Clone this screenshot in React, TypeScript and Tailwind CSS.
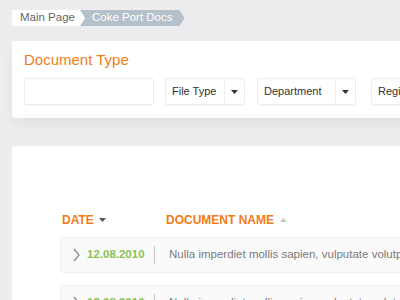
const rows = [
  { date: "12.08.2010", name: "Nulla imperdiet mollis sapien, vulputate volutpat lorem ipsum" },
  { date: "12.08.2010", name: "Nulla imperdiet mollis sapien, vulputate volutpat lorem ipsum" },
];

function Caret({ up = false, className = "" }: { up?: boolean; className?: string }) {
  return (
    <svg width="7" height="4" viewBox="0 0 7 4" className={className}>
      {up ? <path d="M0 4 L3.5 0 L7 4 Z" fill="currentColor" /> : <path d="M0 0 L7 0 L3.5 4 Z" fill="currentColor" />}
    </svg>
  );
}

function Select({ label, width }: { label: string; width: string }) {
  return (
    <div className={`${width} h-[27px] shrink-0 flex bg-white rounded-[3px] border border-[#ececec] shadow-[0_1px_1px_rgba(0,0,0,0.03)]`}>
      <div className="flex-1 flex items-center pl-[6px] text-[11px] text-[#333] overflow-hidden whitespace-nowrap">{label}</div>
      <div className="w-[20px] shrink-0 border-l border-[#ececec] flex items-center justify-center text-[#333]">
        <Caret />
      </div>
    </div>
  );
}

export default function App() {
  return (
    <div className="w-[400px] h-[300px] overflow-hidden bg-[#ededef]" style={{ fontFamily: '"Liberation Sans", Arial, sans-serif' }}>
      {/* BREADCRUMB */}
      <div className="flex pt-[10px] pl-[12px] h-[26px]">
        <div className="relative z-10 h-[16px] pl-[8px] pr-[10px] bg-white flex items-center text-[11.5px] text-[#666] [clip-path:polygon(0_0,calc(100%-5px)_0,100%_50%,calc(100%-5px)_100%,0_100%)]">
          Main Page
        </div>
        <div className="-ml-[5px] h-[16px] pl-[12px] pr-[12px] bg-[#b4c0ca] flex items-center text-[11.5px] text-white [clip-path:polygon(0_0,calc(100%-5px)_0,100%_50%,calc(100%-5px)_100%,0_100%,5px_50%)]">
          Coke Port Docs
        </div>
      </div>

      {/* FILTER PANEL */}
      <div className="mt-[15px] ml-[12px] w-[420px] h-[77px] bg-white rounded-l-[3px] shadow-[0_6px_12px_rgba(0,0,0,0.05)] pl-[12px] pt-[10px]">
        <h1 className="text-[15px] leading-[18px] text-[#f07d17]">Document Type</h1>
        <div className="mt-[9px] flex">
          <div className="w-[130px] h-[27px] shrink-0 bg-white rounded-[3px] border border-[#ececec] shadow-[0_1px_1px_rgba(0,0,0,0.03)]" />
          <div className="ml-[11px] shrink-0">
            <Select label="File Type" width="w-[80px]" />
          </div>
          <div className="ml-[12px] shrink-0">
            <Select label="Department" width="w-[99px]" />
          </div>
          <div className="ml-[15px] shrink-0">
            <Select label="Region" width="w-[99px]" />
          </div>
        </div>
      </div>

      {/* DOCUMENTS PANEL */}
      <div className="mt-[28px] ml-[12px] w-[420px] h-[200px] bg-white rounded-tl-[3px] pl-[48px] pt-[66px]">
        <div className="flex items-center text-[12px] font-bold text-[#f07d17] h-[15px]">
          <div className="w-[106px] shrink-0 flex items-center pl-[2px]">
            DATE
            <Caret className="ml-[5px] text-[#555]" />
          </div>
          <div className="flex items-center">
            DOCUMENT NAME
            <Caret up className="ml-[6px] text-[#c8c8c8]" />
          </div>
        </div>

        <div className="mt-[10px] flex flex-col gap-[12px]">
          {rows.map((r, i) => (
            <div key={i} className="h-[36px] flex items-center overflow-hidden bg-[#fafafa] border border-[#f0f0f0] rounded-l-[3px]">
              <svg width="7" height="14" viewBox="0 0 7 14" className="shrink-0 ml-[12px] text-[#8a8a8a]">
                <path d="M1 1 L6 7 L1 13" fill="none" stroke="currentColor" strokeWidth="1.3" />
              </svg>
              <span className="shrink-0 ml-[7px] w-[67px] text-[11.5px] font-bold text-[#8cc152]">{r.date}</span>
              <span className="shrink-0 w-px h-[18px] bg-[#c4c4c4]" />
              <span className="shrink-0 ml-[14px] text-[11.5px] text-[#7a7a7a] whitespace-nowrap">{r.name}</span>
            </div>
          ))}
        </div>
      </div>
    </div>
  );
}
